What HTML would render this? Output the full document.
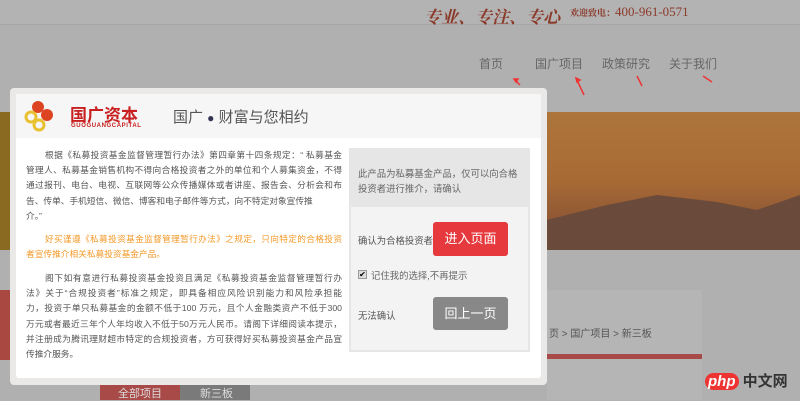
<!DOCTYPE html>
<html><head><meta charset="utf-8"><style>
*{margin:0;padding:0;box-sizing:border-box}
body{width:800px;height:400px;overflow:hidden;background:#b0b0b0;position:relative;font-family:"Liberation Sans","Noto Sans CJK SC",sans-serif;}
.a{position:absolute}
.p{position:absolute;left:26px;width:316px;font-size:8.7px;line-height:15.2px;color:#555}
.p div{white-space:nowrap;text-align:justify;text-align-last:justify;overflow:hidden;font-size:8.7px}
.p div.l{text-align-last:left}
.p div.i{padding-left:19px}
</style></head><body>
<div class="a" style="left:0;top:0;width:800px;height:25px;background:#b3b3b3;border-bottom:1px solid #a6a6a6"></div>
<div class="a" style="left:424px;top:3px;font-size:17px;color:#8b3a2a;font-family:'Noto Serif CJK SC',serif;font-style:italic;font-weight:bold">专业、专注、专心</div>
<div class="a" style="left:570px;top:4px;font-size:9px;color:#8b3a2a;font-family:'Noto Serif CJK SC',serif;font-weight:bold">欢迎致电：<span style="font-size:13px;font-family:'Liberation Serif',serif;font-weight:normal">400-961-0571</span></div>
<div class="a" style="top:55px;left:479px;font-size:12px;color:#666">首页</div>
<div class="a" style="top:55px;left:535px;font-size:12px;color:#666">国广项目</div>
<div class="a" style="top:55px;left:602px;font-size:12px;color:#666">政策研究</div>
<div class="a" style="top:55px;left:669px;font-size:12px;color:#666">关于我们</div>
<svg class="a" style="left:500px;top:70px" width="220" height="30"><g stroke="#e33" stroke-width="1.5" fill="#e33"><path d="M20 15 L14 9"/><path d="M14 9 l4 0 l-2 3z"/><path d="M84 25 L76 8"/><path d="M76 8 l4 2 l-3 2z"/><path d="M142 16 L137 6"/><path d="M212 12 L203 6"/></g></svg>
<div class="a" style="left:357px;top:112px;width:443px;height:137px;background:linear-gradient(#ad753a,#a86a35 50%,#7b4a35)"></div>
<svg class="a" style="left:547px;top:190px" width="253" height="60"><path d="M0 30 L60 15 L110 5 L170 12 L210 20 L253 5 L253 60 L0 60Z" fill="#6a4a3a"/></svg>
<div class="a" style="left:0;top:112px;width:12px;height:138px;background:#8a6a20"></div>
<div class="a" style="left:0;top:290px;width:12px;height:70px;background:#a84840"></div>
<div class="a" style="left:547px;top:290px;width:155px;height:110px;background:#b5b5b5"></div>
<div class="a" style="left:549px;top:325px;font-size:10px;color:#555">页 &gt; 国广项目 &gt; 新三板</div>
<div class="a" style="left:547px;top:354px;width:155px;height:5px;background:#a84a48"></div>
<div class="a" style="left:100px;top:385px;width:80px;height:15px;background:#a84a48;color:#ddd;font-size:11px;padding-left:18px">全部项目</div>
<div class="a" style="left:180px;top:385px;width:70px;height:15px;background:#7a7a7a;color:#ddd;font-size:11px;padding-left:20px">新三板</div>
<div class="a" style="left:705px;top:370px;font-size:15px;font-weight:bold;color:#333"><span style="background:#e33;color:#fff;border-radius:10px;padding:0 3px;font-style:italic">php</span> 中文网</div>

<div class="a" style="left:10px;top:88px;width:537px;height:297px;background:#ebe8e8;border-radius:4px"></div>
<div class="a" style="left:16px;top:94px;width:525px;height:284px;background:#fff;border-radius:3px"></div>
<div class="a" style="left:16px;top:94px;width:525px;height:44px;background:#f6f6f6"></div>
<svg class="a" style="left:22px;top:98px" width="36" height="36"><circle cx="16" cy="9" r="6" fill="#d42"/><circle cx="25" cy="17" r="6" fill="#d42"/><circle cx="9" cy="19" r="5" fill="none" stroke="#e8c030" stroke-width="3"/><circle cx="17" cy="27" r="5" fill="none" stroke="#e8c030" stroke-width="3"/></svg>
<div class="a" style="left:70px;top:101px;font-size:17px;font-weight:bold;color:#c82020">国广资本</div>
<div class="a" style="left:71px;top:123px;font-size:6px;font-weight:bold;color:#c82020;letter-spacing:0.6px">GUOGUANGCAPITAL</div>
<div class="a" style="left:173px;top:106px;font-size:15px;color:#555">国广 <span style="color:#335;font-size:12px">●</span> 财富与您相约</div>

<div class="p" style="top:148px">
<div class="i">根据《私募投资基金监督管理暂行办法》第四章第十四条规定：“ 私募基金</div>
<div>管理人、私募基金销售机构不得向合格投资者之外的单位和个人募集资金，不得</div>
<div>通过报刊、电台、电视、互联网等公众传播媒体或者讲座、报告会、分析会和布</div>
<div class="l">告、传单、手机短信、微信、博客和电子邮件等方式，向不特定对象宣传推</div>
<div class="l">介。”</div>
</div>
<div class="p" style="top:232px;color:#f39a2a">
<div class="i">好买谨遵《私募投资基金监督管理暂行办法》之规定，只向特定的合格投资</div>
<div class="l">者宣传推介相关私募投资基金产品。</div>
</div>
<div class="p" style="top:271px">
<div class="i">阁下如有意进行私募投资基金投资且满足《私募投资基金监督管理暂行办</div>
<div>法》关于“合规投资者”标准之规定，即具备相应风险识别能力和风险承担能</div>
<div>力，投资于单只私募基金的金额不低于100 万元，且个人金融类资产不低于300</div>
<div>万元或者最近三年个人年均收入不低于50万元人民币。请阁下详细阅读本提示，</div>
<div>并注册成为腾讯理财超市特定的合规投资者，方可获得好买私募投资基金产品宣</div>
<div class="l">传推介服务。</div>
</div>

<div class="a" style="left:349px;top:148px;width:181px;height:204px;background:#e6e6e6"></div>
<div class="a" style="left:351px;top:207px;width:177px;height:143px;background:#f3f3f3"></div>
<div class="a" style="left:358px;top:166px;width:168px;font-size:9.4px;line-height:15px;color:#666">此产品为私募基金产品，仅可以向合格投资者进行推介，请确认</div>
<div class="a" style="left:358px;top:233px;font-size:9.4px;color:#555">确认为合格投资者</div>
<div class="a" style="left:433px;top:222px;width:75px;height:34px;background:#e5393e;border-radius:3px;color:#fff;font-size:13px;text-align:center;line-height:34px">进入页面</div>
<div class="a" style="left:358px;top:270px;width:9px;height:9px;background:#ddd;border:1px solid #999;font-size:8px;line-height:8px;text-align:center">✔</div>
<div class="a" style="left:371px;top:268px;font-size:9.4px;color:#666">记住我的选择,不再提示</div>
<div class="a" style="left:358px;top:308px;font-size:9.4px;color:#555">无法确认</div>
<div class="a" style="left:433px;top:297px;width:75px;height:33px;background:#888;border-radius:3px;color:#fff;font-size:13px;text-align:center;line-height:33px">回上一页</div>
</body></html>
